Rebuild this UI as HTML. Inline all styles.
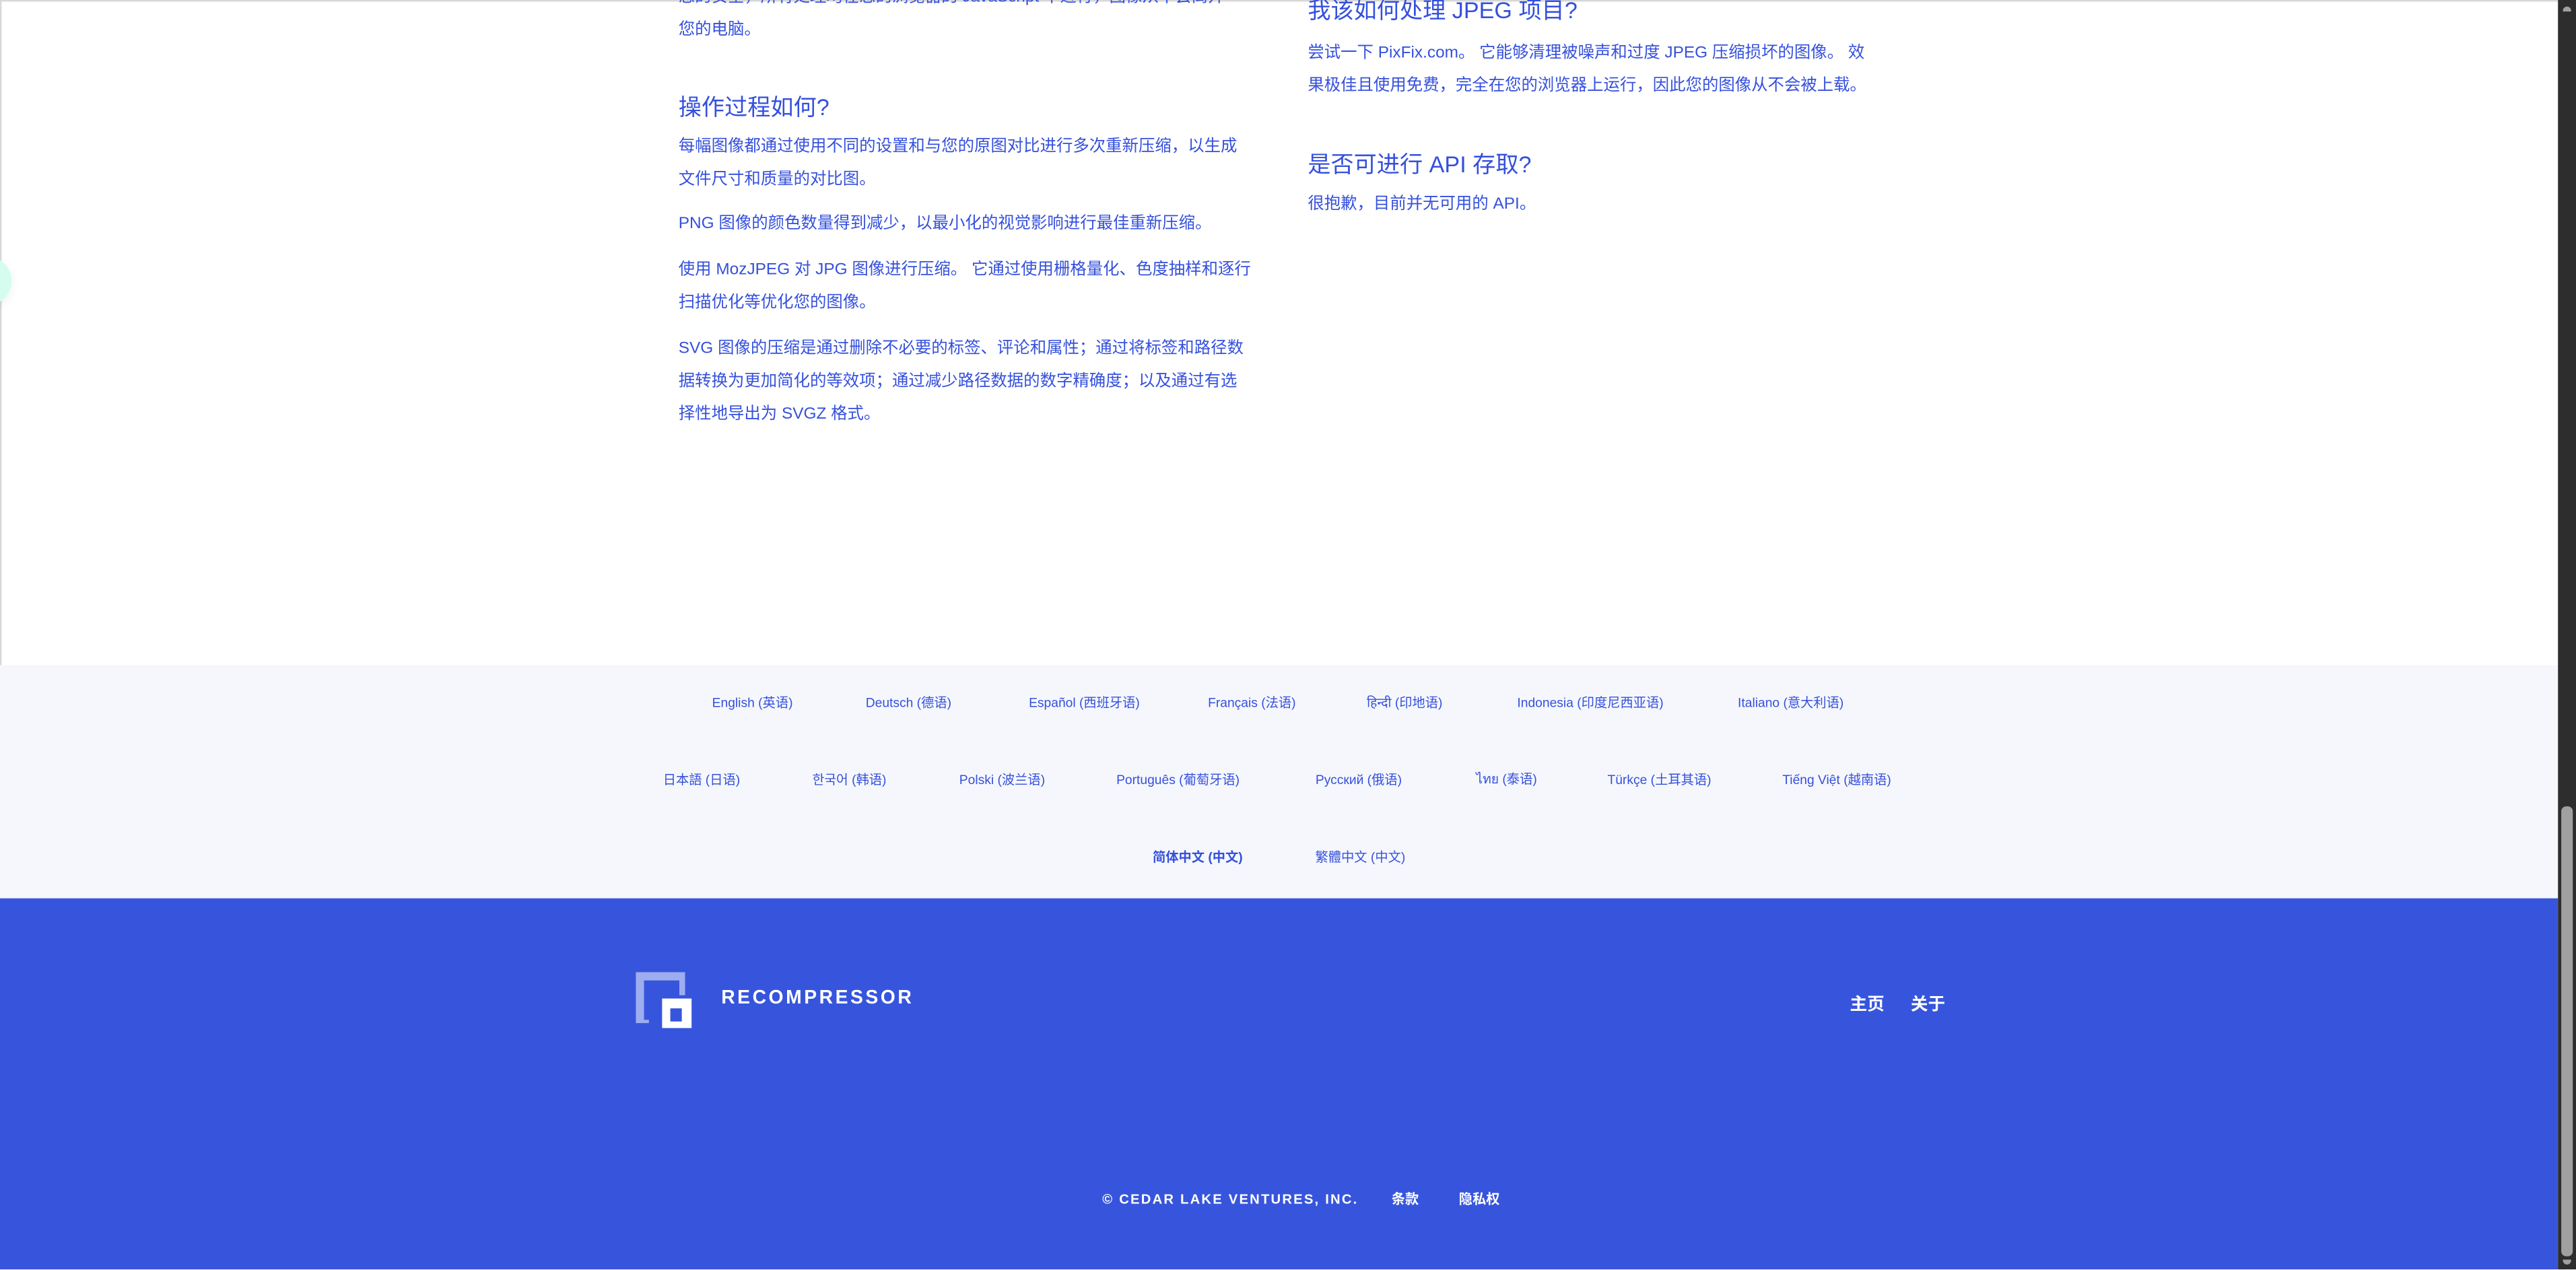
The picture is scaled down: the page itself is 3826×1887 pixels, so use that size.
<!DOCTYPE html>
<html><head><meta charset="utf-8">
<style>
html,body{margin:0;padding:0;width:3826px;height:1887px;overflow:hidden;background:#fff}
#s{position:absolute;left:0;top:0;width:1568px;height:773px;transform:scale(2.4401);transform-origin:0 0;overflow:hidden;background:#fff;font-family:"Liberation Sans","Noto Sans CJK SC",sans-serif;color:#3550dc}
.a{position:absolute;white-space:nowrap}
p.t{position:absolute;margin:0;font-size:10px;line-height:20px}
h3{position:absolute;margin:0;font-weight:normal;font-size:14px;line-height:20px;white-space:nowrap}
.lang{position:absolute;font-size:7.9px;transform:translate(-50%,-50%);white-space:nowrap}
</style></head><body><div id="s">
<div class="a" style="left:0;top:0;width:1557px;height:1px;background:#d8d8d8"></div>
<div class="a" style="left:0;top:0;width:1px;height:405px;background:#d8d8d8"></div>
<div class="a" style="left:-23px;top:156px;width:30px;height:30px;border-radius:50%;background:#d4fdf0;box-shadow:0 2px 6px rgba(0,0,0,0.06)"></div>

<p class="t" style="left:413px;top:-11px;width:360px;white-space:nowrap">您的安全，所有处理均在您的浏览器的 JavaScript 中进行，图像从不会离开<br>您的电脑。</p>
<h3 style="left:413px;top:55px">操作过程如何?</h3>
<p class="t" style="left:413px;top:80px;white-space:nowrap">每幅图像都通过使用不同的设置和与您的原图对比进行多次重新压缩，以生成<br>文件尺寸和质量的对比图。</p>
<p class="t" style="left:413px;top:127px;white-space:nowrap">PNG 图像的颜色数量得到减少，以最小化的视觉影响进行最佳重新压缩。</p>
<p class="t" style="left:413px;top:155px;white-space:nowrap">使用 MozJPEG 对 JPG 图像进行压缩。 它通过使用栅格量化、色度抽样和逐行<br>扫描优化等优化您的图像。</p>
<p class="t" style="left:413px;top:203px;white-space:nowrap">SVG 图像的压缩是通过删除不必要的标签、评论和属性；通过将标签和路径数<br>据转换为更加简化的等效项；通过减少路径数据的数字精确度；以及通过有选<br>择性地导出为 SVGZ 格式。</p>

<h3 style="left:796px;top:-4px">我该如何处理 JPEG 项目?</h3>
<p class="t" style="left:796px;top:23px;white-space:nowrap">尝试一下 PixFix.com。 它能够清理被噪声和过度 JPEG 压缩损坏的图像。 效<br>果极佳且使用免费，完全在您的浏览器上运行，因此您的图像从不会被上载。</p>
<h3 style="left:796px;top:90px">是否可进行 API 存取?</h3>
<p class="t" style="left:796px;top:115px;white-space:nowrap">很抱歉，目前并无可用的 API。</p>

<div class="a" style="left:0;top:405px;width:1557px;height:142px;background:#f5f7fc"></div>
<span class="lang" style="left:458px;top:428px">English (英语)</span>
<span class="lang" style="left:553px;top:428px">Deutsch (德语)</span>
<span class="lang" style="left:660px;top:428px">Español (西班牙语)</span>
<span class="lang" style="left:762px;top:428px">Français (法语)</span>
<span class="lang" style="left:855px;top:428px">हिन्दी (印地语)</span>
<span class="lang" style="left:968px;top:428px">Indonesia (印度尼西亚语)</span>
<span class="lang" style="left:1090px;top:428px">Italiano (意大利语)</span>
<span class="lang" style="left:427px;top:475px">日本語 (日语)</span>
<span class="lang" style="left:517px;top:475px">한국어 (韩语)</span>
<span class="lang" style="left:610px;top:475px">Polski (波兰语)</span>
<span class="lang" style="left:717px;top:475px">Português (葡萄牙语)</span>
<span class="lang" style="left:827px;top:475px">Русский (俄语)</span>
<span class="lang" style="left:917px;top:475px">ไทย (泰语)</span>
<span class="lang" style="left:1010px;top:475px">Türkçe (土耳其语)</span>
<span class="lang" style="left:1118px;top:475px">Tiếng Việt (越南语)</span>
<span class="lang" style="left:729px;top:522px;font-weight:bold">简体中文 (中文)</span>
<span class="lang" style="left:828px;top:522px">繁體中文 (中文)</span>

<div class="a" style="left:0;top:547px;width:1557px;height:226px;background:#3755dc"></div>
<svg class="a" style="left:387px;top:592px" width="34" height="35" viewBox="0 0 34 35">
<path d="M0 0H30V14H26.5V5H5V29H8V31H0Z" fill="#9eadf0"/>
<path d="M16 16H34V34H16Z" fill="#fff"/>
<path d="M21 22H28V30H21Z" fill="#3755dc"/>
</svg>
<div class="a" style="left:439px;top:600px;font-size:11.6px;font-weight:bold;letter-spacing:1.45px;color:#fff;line-height:16px">RECOMPRESSOR</div>
<div class="a" style="left:1126px;top:604px;font-size:10.5px;font-weight:bold;color:#fff;line-height:16px">主页</div>
<div class="a" style="left:1163px;top:604px;font-size:10.5px;font-weight:bold;color:#fff;line-height:16px">关于</div>
<div class="a" style="left:671px;top:724px;font-size:8.3px;font-weight:bold;letter-spacing:0.9px;color:#fff;line-height:12px">© CEDAR LAKE VENTURES, INC.</div>
<div class="a" style="left:847px;top:724px;font-size:8.3px;font-weight:bold;color:#fff;line-height:12px">条款</div>
<div class="a" style="left:888px;top:724px;font-size:8.3px;font-weight:bold;color:#fff;line-height:12px">隐私权</div>

<div class="a" style="left:1557px;top:0;width:11px;height:773px;background:#2d2d2d"></div>
<div class="a" style="left:1560px;top:4px;width:5px;height:3px;background:#a0a0a0;border-radius:3px 3px 0 0"></div>
<div class="a" style="left:1559px;top:491px;width:7px;height:274px;background:#a0a0a0;border-radius:3px"></div>
<div class="a" style="left:1560px;top:767px;width:5px;height:3px;background:#a0a0a0;border-radius:0 0 3px 3px"></div>
</div></body></html>
